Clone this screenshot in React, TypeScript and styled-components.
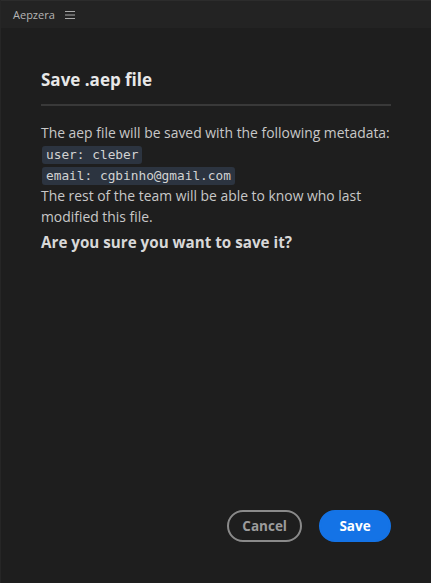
import styled, { createGlobalStyle } from "styled-components";

const GlobalStyle = createGlobalStyle`
  html, body {
    margin: 0;
    padding: 0;
    background: #1e1e1e;
  }
  body {
    font-family: "Open Sans", "Noto Sans", sans-serif;
  }
`;

const Panel = styled.div`
  width: 431px;
  height: 583px;
  display: flex;
  flex-direction: column;
  background: #1e1e1e;
  border-left: 1px solid #262626;
  box-sizing: border-box;
`;

const TitleBar = styled.div`
  height: 28px;
  display: flex;
  align-items: center;
  gap: 10px;
  padding-left: 12px;
  background: #232323;
  border-top: 1px solid #2c2c2c;
  box-sizing: border-box;
  color: #b5b5b5;
  font-size: 11px;
`;

const MenuIcon = () => (
  <svg width="10" height="8" viewBox="0 0 10 8">
    <path d="M0 0.5H10M0 4H10M0 7.5H10" stroke="#a8a8a8" strokeWidth="1" />
  </svg>
);

const Dialog = styled.div`
  flex: 1;
  display: flex;
  flex-direction: column;
  padding: 40px 40px 41px 40px;
`;

const Heading = styled.h2`
  margin: 0;
  padding-bottom: 13px;
  font-size: 17px;
  font-weight: 700;
  color: #e8e8e8;
  border-bottom: 2px solid #393939;
`;

const Body = styled.div`
  margin-top: 16px;
  font-size: 13.9px;
  line-height: 21px;
  color: #c8c8c8;
`;

const Line = styled.div``;

const Code = styled.code`
  display: inline-block;
  margin: 1px 0 0 1px;
  padding: 0 4px;
  line-height: 18px;
  border-radius: 3px;
  background: #2c3440;
  color: #d2d2d2;
  font-family: "DejaVu Sans Mono", monospace;
  font-size: 12.8px;
`;

const Question = styled.div`
  margin-top: 5px;
  font-size: 15.2px;
  font-weight: 700;
  color: #d8d8d8;
`;

const Footer = styled.div`
  margin-top: auto;
  display: flex;
  justify-content: flex-end;
  gap: 17px;
`;

const Button = styled.button<{ $primary?: boolean }>`
  height: 32px;
  min-width: 72px;
  padding: 0 13px;
  border-radius: 16px;
  font-family: "Open Sans", "Noto Sans", sans-serif;
  font-size: 13.5px;
  font-weight: 700;
  cursor: pointer;
  border: 2px solid ${(p) => (p.$primary ? "#1473e6" : "#8a8a8a")};
  background: ${(p) => (p.$primary ? "#1473e6" : "transparent")};
  color: ${(p) => (p.$primary ? "#ffffff" : "#9c9c9c")};
`;

export default function App() {
  return (
    <>
      <GlobalStyle />
      <Panel>
        <TitleBar>
          <span>Aepzera</span>
          <MenuIcon />
        </TitleBar>
        <Dialog>
          <Heading>Save .aep file</Heading>
          <Body>
            <Line>The aep file will be saved with the following metadata:</Line>
            <Line>
              <Code>user: cleber</Code>
            </Line>
            <Line>
              <Code>email: cgbinho@gmail.com</Code>
            </Line>
            <Line>The rest of the team will be able to know who last modified this file.</Line>
            <Question>Are you sure you want to save it?</Question>
          </Body>
          <Footer>
            <Button>Cancel</Button>
            <Button $primary>Save</Button>
          </Footer>
        </Dialog>
      </Panel>
    </>
  );
}
